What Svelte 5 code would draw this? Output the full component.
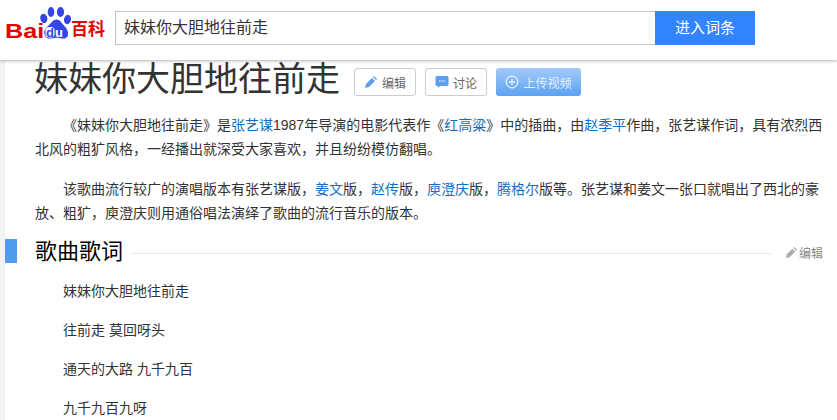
<script>
  const lyrics = ['妹妹你大胆地往前走', '往前走 莫回呀头', '通天的大路 九千九百', '九千九百九呀'];
</script>

<div class="page">
  <header class="top">
    <div class="logo">
      <span class="bai">Bai</span>
      <svg class="paw" width="33" height="33" viewBox="0 0 33 33">
        <ellipse cx="3.800" cy="11.500" rx="3.500" ry="4.700" transform="rotate(-12 3.800 11.500)" fill="#3646e6"/>
        <ellipse cx="11" cy="5" rx="3.300" ry="5" fill="#3646e6"/>
        <ellipse cx="20.500" cy="5" rx="3.600" ry="5" fill="#3646e6"/>
        <ellipse cx="27.500" cy="12.500" rx="3.500" ry="4.700" transform="rotate(12 27.500 12.500)" fill="#3646e6"/>
        <path d="M16.500 12.500c-3.500 0-4.500 3-7.500 5.500-3.500 3-5.500 6-4.500 9.500 1 3.500 4 4.500 7 4 2-.4 3.500-.8 5-.8s3.500.6 5 .8c3 .5 6-.5 6.500-4 .5-3.500-1.500-6.500-4.500-9.500-2.500-2.500-3.500-5.500-7-5.500z" fill="#3646e6"/>
        <rect x="5.500" y="20" width="9" height="10.500" rx="3.500" fill="#fff"/>
        <text x="6" y="29.500" class="d">d</text>
        <text x="15" y="29.500" class="u">u</text>
      </svg>
      <span class="bk">百科</span>
    </div>
    <div class="search">
      <div class="input">妹妹你大胆地往前走</div>
      <div class="go">进入词条</div>
    </div>
  </header>

  <main class="body">
    <div class="title-row">
      <h1>妹妹你大胆地往前走</h1>
      <button class="btn">
        <svg width="14" height="14" viewBox="0 0 14 14"><path d="M1 13l1-4 6-6 3 3-6 6z" fill="#5b9ff0"/><path d="M9 2l1-1 3 3-1 1z" fill="#5b9ff0"/></svg>
        编辑
      </button>
      <button class="btn">
        <svg width="14" height="14" viewBox="0 0 14 14"><path d="M2 1h10a1.500 1.500 0 0 1 1.500 1.500v7A1.500 1.500 0 0 1 12 11H5l-2 2v-2H2A1.500 1.500 0 0 1 .5 9.500v-7A1.500 1.500 0 0 1 2 1z" fill="#5b9ff0"/><path d="M4 6h1.500M6.300 6h1.500M8.600 6h1.500" stroke="#fff" stroke-width="1.200"/></svg>
        讨论
      </button>
      <button class="btn video">
        <svg width="14" height="14" viewBox="0 0 14 14" fill="none" stroke="#e4effc" stroke-width="1.300"><circle cx="7" cy="7" r="5.800"/><path d="M7 4v6M4 7h6"/></svg>
        上传视频
      </button>
    </div>

    <p>《妹妹你大胆地往前走》是<a href="#a">张艺谋</a>1987年导演的电影代表作《<a href="#a">红高粱</a>》中的插曲&#xFF0C;由<a href="#a">赵季平</a>作曲&#xFF0C;张艺谋作词&#xFF0C;具有浓烈西北风的粗犷风格&#xFF0C;一经播出就深受大家喜欢&#xFF0C;并且纷纷模仿翻唱。</p>
    <p>该歌曲流行较广的演唱版本有张艺谋版&#xFF0C;<a href="#a">姜文</a>版&#xFF0C;<a href="#a">赵传</a>版&#xFF0C;<a href="#a">庾澄庆</a>版&#xFF0C;<a href="#a">腾格尔</a>版等。张艺谋和姜文一张口就唱出了西北的豪放&#x3001;粗犷&#xFF0C;庾澄庆则用通俗唱法演绎了歌曲的流行音乐的版本。</p>

    <div class="section">
      <span class="mark"></span>
      <h2>歌曲歌词</h2>
      <span class="rule"></span>
      <span class="edit">
        <svg width="13" height="13" viewBox="0 0 14 14"><path d="M1 13l1-4 6-6 3 3-6 6z" fill="#aaa"/><path d="M9 2l1-1 3 3-1 1z" fill="#aaa"/></svg>
        编辑
      </span>
    </div>

    <div class="lyrics">
      {#each lyrics as line}
        <p class="line">{line}</p>
      {/each}
    </div>
  </main>
</div>

<style>
  :global(body) {
    margin: 0;
    background: #fff;
    overflow: hidden;
  }
  .page {
    width: 837px;
    height: 420px;
    overflow: hidden;
    font-family: "Liberation Sans", "Noto Sans CJK SC", sans-serif;
    color: #333;
  }
  .top {
    height: 60px;
    box-sizing: border-box;
    display: flex;
    align-items: flex-start;
    background: #fff;
    box-shadow: 0 1px 3px rgba(0, 0, 0, 0.3);
    position: relative;
    z-index: 1;
  }
  .logo {
    width: 115px;
    display: flex;
    align-items: flex-start;
    box-sizing: border-box;
    padding: 7px 0 0 5px;
    color: #e10601;
    font-weight: 700;
  }
  .bai {
    font-size: 21px;
    line-height: 24px;
    margin-top: 12px;
    width: 35px;
    transform: scaleX(1.2);
    transform-origin: left center;
  }
  .paw {
    flex: none;
  }
  .bk {
    font-size: 17px;
    line-height: 24px;
    margin: 11px 0 0 -2px;
    white-space: nowrap;
  }
  .d, .u {
    font: 700 13px "Liberation Sans", sans-serif;
  }
  .d { fill: #3646e6; }
  .u { fill: #fff; }
  .search {
    display: flex;
    margin-top: 11px;
    height: 34px;
  }
  .input {
    width: 540px;
    box-sizing: border-box;
    border: 1px solid #c4c4c4;
    border-right: 0;
    padding-left: 8px;
    font-size: 16px;
    line-height: 32px;
    color: #333;
  }
  .go {
    width: 100px;
    background: #3385ff;
    color: #fff;
    font-size: 15px;
    line-height: 34px;
    text-align: center;
  }
  .body {
    height: 360px;
    box-sizing: border-box;
    margin-left: 5px;
    box-shadow: -5px 0 0 #f3f3f3;
    padding: 0 14px 0 30px;
    overflow: hidden;
  }
  .title-row {
    display: flex;
    align-items: center;
    height: 40px;
    margin-top: -1px;
    margin-bottom: 14px;
  }
  h1 {
    margin: 0 14px 0 -1px;
    font-weight: 400;
    font-size: 34px;
    line-height: 40px;
    color: #333;
    white-space: nowrap;
  }
  .btn {
    height: 28px;
    width: 62px;
    margin: 6px 9px 0 0;
    padding: 0;
    display: flex;
    align-items: center;
    justify-content: center;
    gap: 4px;
    border: 1px solid #ccc;
    border-radius: 3px;
    background: #fff;
    color: #666;
    font: 12px "Liberation Sans", "Noto Sans CJK SC", sans-serif;
  }
  .video {
    width: 85px;
    border: 0;
    color: #e4effc;
    background: linear-gradient(to bottom, #a3cbf8, #5ca2f2);
  }
  p {
    margin: 0 0 16px;
    font-size: 14px;
    line-height: 24px;
    text-indent: 28px;
    color: #333;
  }
  a {
    color: #136ec2;
    text-decoration: none;
  }
  .section {
    display: flex;
    align-items: center;
    height: 28px;
    margin-top: -3px;
    margin-bottom: 13px;
    position: relative;
  }
  .mark {
    position: absolute;
    left: -30px;
    top: 1px;
    width: 12px;
    height: 24px;
    background: #4f9cee;
  }
  h2 {
    margin: 0 8px 0 0;
    font-size: 22px;
    font-weight: 400;
    color: #000;
    line-height: 28px;
    white-space: nowrap;
  }
  .rule {
    flex: 1;
    height: 1px;
    margin-top: 2px;
    background: #e8e8e8;
  }
  .edit {
    display: flex;
    align-items: center;
    gap: 1px;
    padding-left: 14px;
    font-size: 12px;
    color: #888;
    background: #fff;
  }
  .line {
    margin-bottom: 15px;
  }
</style>
